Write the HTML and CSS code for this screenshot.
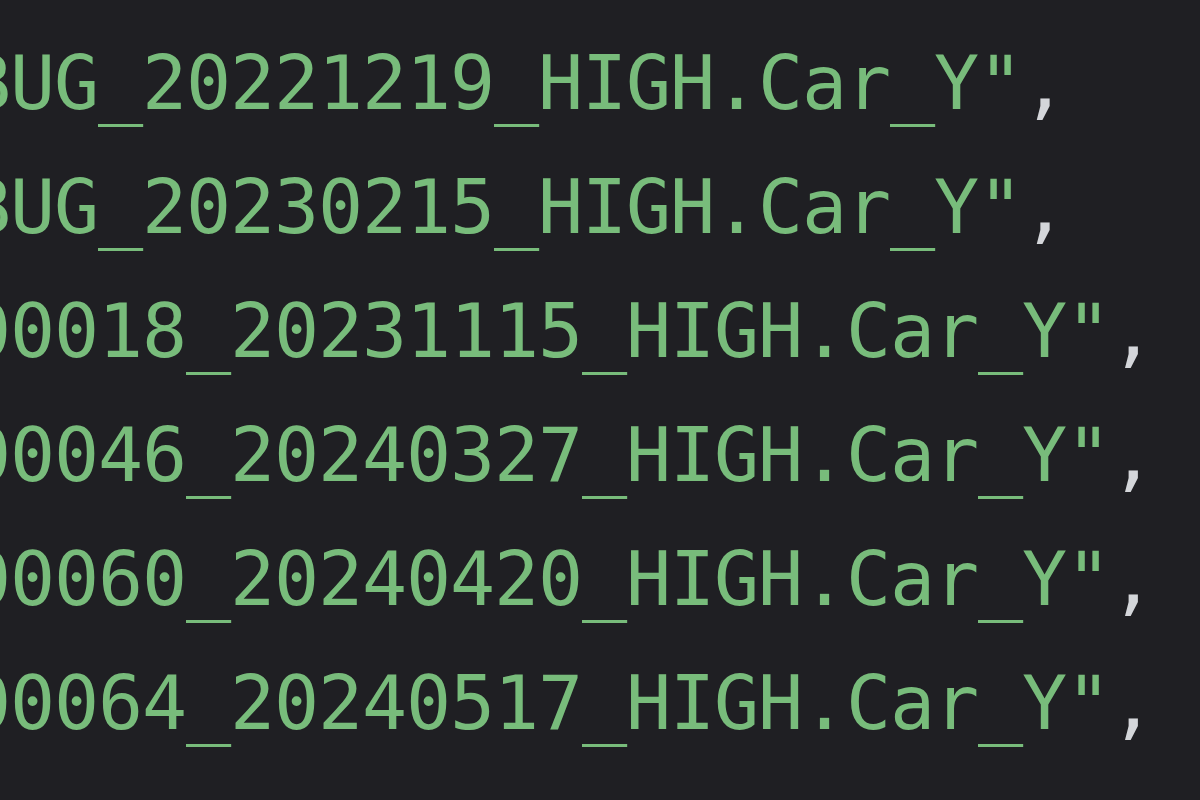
FILE: index.html
```html
<!DOCTYPE html>
<html lang="en">
<head>
<meta charset="utf-8">
<title>Code</title>
<link rel="stylesheet" href="styles.css">
</head>
<body>
<div class="editor">
  <pre class="code"><span class="line"><span class="str">"DEBUG_20221219_HIGH.Car_Y"</span><span class="punct">,</span></span>
<span class="line"><span class="str">"DEBUG_20230215_HIGH.Car_Y"</span><span class="punct">,</span></span>
<span class="line"><span class="str">"CAR_00018_20231115_HIGH.Car_Y"</span><span class="punct">,</span></span>
<span class="line"><span class="str">"CAR_00046_20240327_HIGH.Car_Y"</span><span class="punct">,</span></span>
<span class="line"><span class="str">"CAR_00060_20240420_HIGH.Car_Y"</span><span class="punct">,</span></span>
<span class="line"><span class="str">"CAR_00064_20240517_HIGH.Car_Y"</span><span class="punct">,</span></span></pre>
</div>
</body>
</html>
```

FILE: styles.css
```css
html, body {
  margin: 0;
  padding: 0;
  background: #1f1f23;
  width: 1200px;
  height: 800px;
  overflow: hidden;
}

.editor {
  width: 1200px;
  height: 800px;
  overflow: hidden;
  background: #1f1f23;
}

.code {
  margin: 0;
  padding-top: 21px;
  font-family: "DejaVu Sans Mono", "Liberation Mono", monospace;
  font-size: 75px;
  letter-spacing: -1.15px;
  line-height: 124px;
  white-space: pre;
  display: flex;
  flex-direction: column;
}

.line {
  display: block;
  height: 124px;
  margin-left: -166px;
}

.line:nth-child(n+3) .str {
  margin-left: -88px;
}

.str {
  color: #78bc7b;
}

.punct {
  color: #d4d6da;
}
```
